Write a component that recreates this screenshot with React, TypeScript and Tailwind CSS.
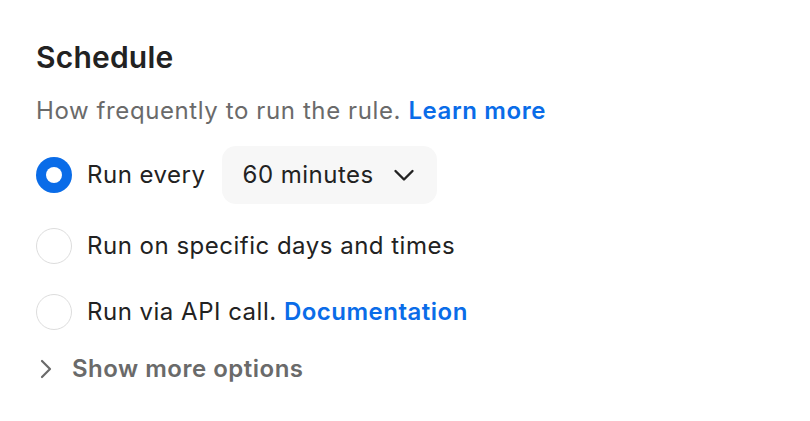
import React from "react";

function Radio({ checked }: { checked?: boolean }) {
  return checked ? (
    <span className="flex h-9 w-9 shrink-0 items-center justify-center rounded-full bg-[#0a6ce8]">
      <span className="h-4 w-4 rounded-full bg-white" />
    </span>
  ) : (
    <span className="h-9 w-9 shrink-0 rounded-full border-[1.5px] border-[#dddddd] bg-white" />
  );
}

export default function App() {
  return (
    <div
      className="min-h-[421px] w-[810px] bg-white pl-9 pt-[39px] text-[#222222]"
      style={{ fontFamily: "Inter, 'Noto Sans', sans-serif" }}
    >
      {/* Title */}
      <h2 className="h-9 text-[30px] font-semibold leading-9 tracking-[0.2px]">Schedule</h2>

      {/* Description */}
      <p className="mt-5 h-8 text-[24px] leading-8 tracking-[0.6px] text-[#6a6a6a]">
        How frequently to run the rule.{" "}
        <a className="font-semibold text-[#0a6ce8]">Learn more</a>
      </p>

      {/* Options */}
      <div className="mt-[19px] flex h-[58px] items-center text-[24px] leading-8 tracking-[0.5px]">
        <Radio checked />
        <span className="ml-[15px]">Run every</span>
        <button className="ml-4 flex h-[58px] w-[215px] items-center rounded-[14px] bg-[#f7f7f7] pl-[21px] pr-[22px] text-[#222222]">
          <span>60 minutes</span>
          <svg
            className="ml-auto"
            width="22"
            height="22"
            viewBox="0 0 22 22"
            fill="none"
            stroke="currentColor"
            strokeWidth="2.4"
            strokeLinecap="round"
            strokeLinejoin="round"
          >
            <path d="M2.5 7l8.5 8.5 8.5-8.5" />
          </svg>
        </button>
      </div>

      <div className="mt-[24px] flex h-9 items-center text-[24px] leading-8 tracking-[0.5px]">
        <Radio />
        <span className="ml-[15px]">Run on specific days and times</span>
      </div>

      <div className="mt-[30px] flex h-9 items-center text-[24px] leading-8 tracking-[0.5px]">
        <Radio />
        <span className="ml-[15px]">
          Run via API call. <a className="font-semibold text-[#0a6ce8]">Documentation</a>
        </span>
      </div>

      {/* More */}
      <div className="mt-[23px] flex h-8 items-center text-[#6a6a6a]">
        <svg
          className="ml-[3px]"
          width="14"
          height="22"
          viewBox="0 0 14 22"
          fill="none"
          stroke="currentColor"
          strokeWidth="2.2"
          strokeLinecap="round"
          strokeLinejoin="round"
        >
          <path d="M3 3l8 8-8 8" />
        </svg>
        <span className="ml-[19px] text-[24px] font-semibold leading-8 tracking-[0.5px]">
          Show more options
        </span>
      </div>
    </div>
  );
}
